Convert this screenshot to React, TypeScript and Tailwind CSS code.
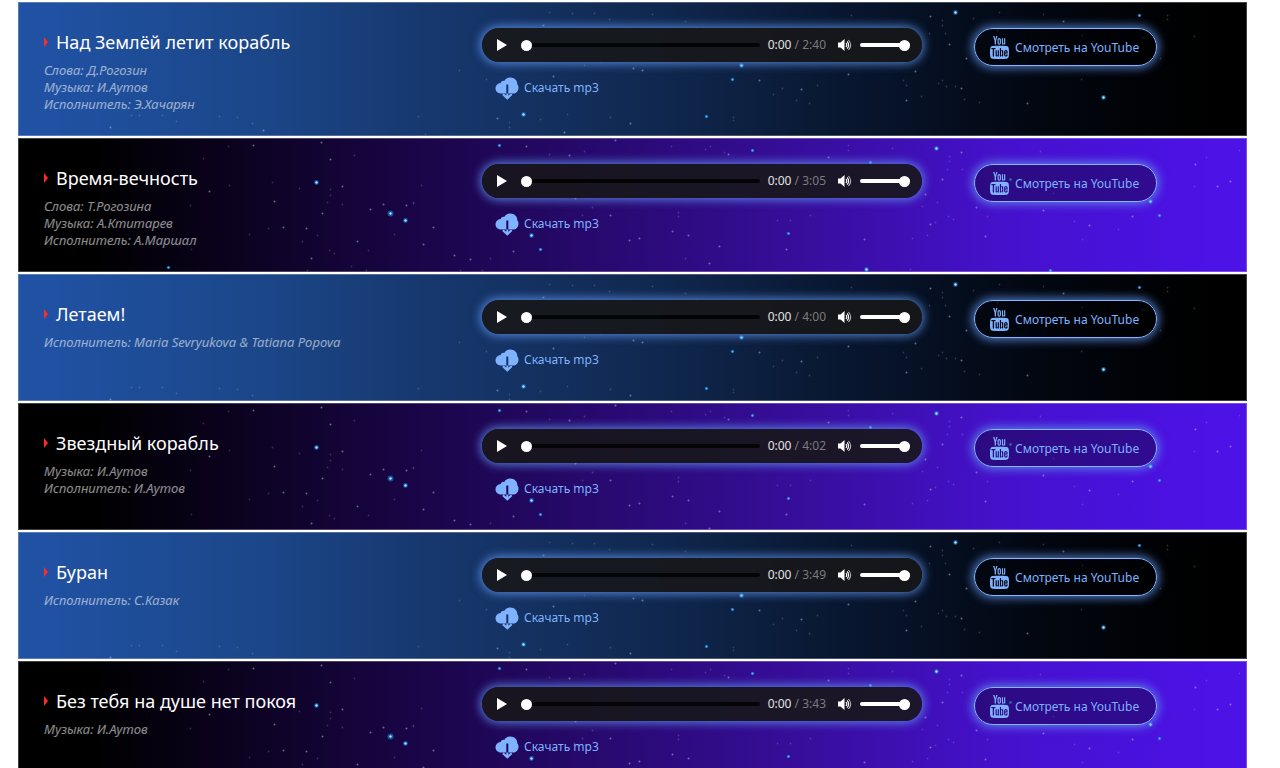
import { useState } from 'react';
import { TfiYoutube } from 'react-icons/tfi';

interface Song {
  id: number;
  title: string;
  credits: string[];
  duration: string;
  seconds: number;
}

// x, y, brightness: 1 = faint, 2 = normal, 3 = small blue, 4 and 5 = bright blue
type Star = [number, number, number];

const songs: Song[] = [
  {
    id: 1,
    title: 'Над Землёй летит корабль',
    credits: ['Слова: Д.Рогозин', 'Музыка: И.Аутов', 'Исполнитель: Э.Хачарян'],
    duration: '2:40',
    seconds: 160,
  },
  {
    id: 2,
    title: 'Время-вечность',
    credits: ['Слова: Т.Рогозина', 'Музыка: А.Ктитарев', 'Исполнитель: А.Маршал'],
    duration: '3:05',
    seconds: 185,
  },
  {
    id: 3,
    title: 'Летаем!',
    credits: ['Исполнитель: Maria Sevryukova & Tatiana Popova'],
    duration: '4:00',
    seconds: 240,
  },
  {
    id: 4,
    title: 'Звездный корабль',
    credits: ['Музыка: И.Аутов', 'Исполнитель: И.Аутов'],
    duration: '4:02',
    seconds: 242,
  },
  {
    id: 5,
    title: 'Буран',
    credits: ['Исполнитель: С.Казак'],
    duration: '3:49',
    seconds: 229,
  },
  {
    id: 6,
    title: 'Без тебя на душе нет покоя',
    credits: ['Музыка: И.Аутов'],
    duration: '3:43',
    seconds: 223,
  },
];

const blueSky: Star[] = [
  [110, 127, 2], [263, 130, 2], [139, 115, 1], [131, 115, 1], [162, 115, 1], [176, 121, 1], [219, 116, 1],
  [237, 117, 1], [252, 123, 1], [418, 116, 1], [543, 25, 2], [572, 13, 1], [549, 12, 1], [594, 13, 1],
  [609, 19, 1], [652, 14, 1], [685, 21, 1], [584, 65, 1], [600, 61, 1], [633, 68, 2], [642, 70, 2],
  [553, 76, 2], [486, 79, 1], [459, 70, 1], [497, 118, 2], [523, 114, 4], [509, 122, 1], [509, 127, 1],
  [567, 114, 1], [610, 117, 1], [630, 123, 2], [564, 132, 2], [425, 134, 1], [540, 119, 1], [696, 28, 1],
  [851, 15, 1], [930, 16, 2], [955, 12, 4], [942, 20, 1], [942, 25, 1], [929, 33, 1], [945, 33, 1],
  [949, 44, 2], [966, 58, 2], [741, 65, 4], [732, 79, 3], [759, 80, 2], [801, 89, 2], [817, 85, 1],
  [848, 74, 2], [915, 71, 2], [903, 80, 1], [906, 85, 1], [906, 100, 2], [921, 96, 1], [942, 80, 1],
  [938, 83, 1], [946, 86, 1], [955, 86, 1], [961, 88, 2], [964, 99, 1], [979, 102, 1], [706, 116, 3],
  [733, 117, 1], [733, 120, 1], [796, 100, 1], [809, 103, 1], [782, 88, 1], [773, 94, 1], [973, 18, 1],
  [999, 12, 1], [1043, 14, 1], [1063, 21, 2], [1139, 15, 3], [1167, 15, 1], [1167, 19, 1], [1194, 36, 1],
  [1160, 58, 1], [1081, 79, 1], [1103, 97, 4], [1027, 103, 2], [1082, 35, 1], [1142, 37, 1], [997, 30, 1],
];

const violetSky: Star[] = [
  [321, 6, 2], [253, 9, 2], [228, 10, 1], [330, 23, 2], [354, 19, 1], [203, 22, 1], [272, 46, 1],
  [316, 46, 4], [342, 50, 2], [229, 49, 1], [209, 55, 2], [299, 52, 1], [330, 53, 1], [330, 59, 1],
  [327, 66, 1], [342, 68, 1], [322, 77, 2], [274, 65, 2], [190, 69, 1], [383, 68, 2], [370, 73, 2],
  [390, 77, 5], [406, 69, 2], [405, 84, 4], [413, 66, 1], [283, 91, 2], [268, 92, 1], [306, 92, 2],
  [249, 98, 1], [317, 99, 1], [302, 105, 1], [357, 105, 2], [394, 98, 1], [191, 113, 1], [329, 114, 1],
  [334, 117, 1], [311, 122, 2], [368, 114, 1], [168, 131, 3], [307, 134, 1], [366, 134, 1], [351, 130, 1],
  [499, 9, 3], [526, 10, 2], [549, 18, 1], [569, 19, 2], [584, 15, 1], [615, 4, 2], [671, 10, 1],
  [705, 13, 1], [710, 10, 1], [724, 16, 1], [728, 18, 2], [752, 14, 3], [421, 49, 1], [413, 67, 1],
  [433, 91, 2], [423, 108, 2], [454, 119, 2], [470, 123, 2], [490, 122, 1], [513, 115, 2], [531, 99, 4],
  [540, 113, 3], [575, 62, 2], [592, 71, 1], [582, 79, 1], [574, 84, 1], [610, 79, 2], [629, 104, 2],
  [639, 102, 2], [672, 95, 2], [688, 99, 2], [678, 76, 1], [678, 80, 1], [719, 110, 2], [709, 127, 2],
  [685, 122, 1], [777, 84, 1], [788, 97, 3], [790, 84, 1], [786, 113, 2], [810, 79, 1], [460, 134, 1],
  [482, 134, 1], [828, 21, 2], [848, 9, 1], [848, 14, 1], [892, 12, 1], [936, 12, 4], [961, 16, 2],
  [949, 20, 1], [949, 25, 1], [947, 33, 1], [962, 33, 1], [942, 43, 2], [870, 26, 3], [925, 58, 2],
  [937, 66, 1], [922, 70, 1], [976, 71, 2], [948, 80, 1], [953, 83, 1], [935, 86, 1], [930, 88, 2],
  [927, 99, 1], [912, 102, 1], [864, 103, 2], [985, 100, 2], [987, 80, 1], [1043, 74, 2], [1074, 85, 1],
  [1089, 89, 2], [1132, 80, 2], [1150, 65, 4], [1159, 79, 3], [1040, 15, 1], [1010, 43, 3], [1053, 57, 1],
  [1195, 28, 2], [1206, 21, 1], [1194, 50, 1], [1217, 50, 2], [1230, 45, 2], [1239, 14, 1], [866, 133, 4],
  [910, 133, 1], [1050, 134, 3], [1118, 93, 1], [1082, 103, 1],
];

function Starfield({ stars }: { stars: Star[] }) {
  return (
    <svg className="absolute inset-0 w-full h-full pointer-events-none" aria-hidden="true">
      <g transform="translate(-18 -2)">
        {stars.map(([x, y, level]) => (
          <g key={`${x}-${y}`}>
            {level > 2 && (
              <circle cx={x + 0.5} cy={y + 0.5} r={level === 5 ? 3 : level === 4 ? 2.4 : 1.8} fill="#1683e0" opacity={0.6} />
            )}
            <circle
              cx={x + 0.5}
              cy={y + 0.5}
              r={level > 3 ? 1.2 : level > 1 ? 1 : 0.9}
              fill={level > 3 ? '#a5e4ff' : level === 3 ? '#5db4f2' : '#c3c3e6'}
              opacity={level > 2 ? 1 : level === 2 ? 0.5 : 0.22}
            />
          </g>
        ))}
      </g>
    </svg>
  );
}

function CloudDownload() {
  return (
    <svg className="w-6 h-[23px] shrink-0" viewBox="0 0 24 23" fill="currentColor" aria-hidden="true">
      <path
        fillRule="evenodd"
        d="M6 16.500C2.700 16.500.5 14 .5 11.200C.5 8.300 2.600 6.200 5.600 5.900C6.200 4.300 7.700 3.600 9.200 3.900C10.400 1.800 12.600.5 15.200.5C19.400.5 22.400 3.500 22.300 7.200C23.200 8.200 23.600 9.500 23.500 11.200C23.300 14.200 21 16.500 18 16.500H13.300V7.500H11.300V16.500Z"
      />
      <path d="M11.300 16.500h2v2.200l2.600-2.200 1.500 1.500-5.100 4.700L7.200 18l1.500-1.500 2.600 2.200z" />
    </svg>
  );
}

function VolumeIcon() {
  return (
    <svg className="w-[14px] h-3" viewBox="0 0 14 12" aria-hidden="true">
      <path d="M0 3.500H2.500L6.500 0V12L2.500 8.500H0Z" fill="#fff" />
      <g fill="none" stroke="#fff" strokeWidth="1.100">
        <path d="M8 4Q9.600 6 8 8" />
        <path d="M9.200 2.400Q12 6 9.200 9.600" />
        <path d="M10.500 1Q14.800 6 10.500 11" opacity="0.7" />
      </g>
    </svg>
  );
}

const glow = 'shadow-[0_0_10px_2px_rgba(96,150,240,0.8)]';

const range =
  'appearance-none h-1 rounded-full cursor-pointer [&::-webkit-slider-thumb]:appearance-none [&::-webkit-slider-thumb]:w-[11px] [&::-webkit-slider-thumb]:h-[11px] [&::-webkit-slider-thumb]:rounded-full [&::-webkit-slider-thumb]:bg-white';

const formatTime = (s: number) => `${Math.floor(s / 60)}:${String(s % 60).padStart(2, '0')}`;

function Player({ song }: { song: Song }) {
  const [time, setTime] = useState(0);
  const [volume, setVolume] = useState(100);

  return (
    <div className={`flex items-center h-[34px] pl-[15px] pr-3 rounded-full bg-[#17171a]/90 ${glow}`}>
      <button type="button" aria-label="Play" className="mr-[14px] cursor-pointer">
        <svg className="w-[10px] h-3" viewBox="0 0 10 12" fill="#fff" aria-hidden="true">
          <path d="M0 0L10 6L0 12Z" />
        </svg>
      </button>
      <input
        type="range"
        aria-label={`Seek: ${song.title}`}
        min={0}
        max={song.seconds}
        value={time}
        onChange={(e) => setTime(Number(e.target.value))}
        className={`${range} flex-1 min-w-0 bg-black/80`}
      />
      <div className="ml-2 text-[12px] leading-4 text-[#7b7b7d] whitespace-nowrap">
        <span className="text-[#e2e2e2]">{formatTime(time)}</span> / {song.duration}
      </div>
      <button type="button" aria-label="Mute" className="ml-3 mr-2 cursor-pointer" onClick={() => setVolume(0)}>
        <VolumeIcon />
      </button>
      <input
        type="range"
        aria-label={`Volume: ${song.title}`}
        value={volume}
        onChange={(e) => setVolume(Number(e.target.value))}
        className={`${range} w-[50px] bg-white`}
      />
    </div>
  );
}

export default function App() {
  return (
    <main className="flex flex-col gap-[2px] pt-[2px] pl-[18px] pr-[33px] bg-white font-['Noto_Sans','Liberation_Sans',sans-serif]">
      {songs.map((song, i) => {
        const violet = i % 2 === 1;
        return (
          <section
            key={song.id}
            className={`relative overflow-hidden pt-[26px] pb-[23px] ${
              violet
                ? 'bg-[linear-gradient(90deg,#000_6%,#180543_31%,#2a0a76_50%,#380e9f_65%,#4511cc_80%,#4c12e6_97%)]'
                : 'bg-[linear-gradient(90deg,#2051a2_3%,#1b4688_20%,#17386f_33%,#10284f_52%,#081730_67%,#02060f_84%,#000_97%)]'
            }`}
          >
            <Starfield stars={violet ? violetSky : blueSky} />
            <div className="absolute inset-0 border border-white/25 pointer-events-none" />
            <div className="relative grid grid-cols-[464fr_492fr_273fr]">
              <div className="pl-[26px] pr-4">
                <h2 className="flex items-center gap-2 text-[18px] leading-7 text-white">
                  <svg className="w-1 h-[10px] shrink-0" viewBox="0 0 4 10" fill="#ff2a2a" aria-hidden="true">
                    <path d="M0 0L4 5L0 10Z" />
                  </svg>
                  {song.title}
                </h2>
                <div className="mt-[6px] text-[13px] leading-[17px] italic text-white/55">
                  {song.credits.map((credit) => (
                    <p key={credit}>{credit}</p>
                  ))}
                </div>
              </div>

              <div className="pr-[52px]">
                <Player song={song} />
                <a href="#" className="inline-flex items-center gap-[5px] h-9 mt-2 ml-[13px] text-[12px] text-[#7fb2ff]">
                  <CloudDownload />
                  Скачать mp3
                </a>
              </div>

              <div>
                <a
                  href="#"
                  className={`inline-flex items-center gap-1 h-[38px] pl-[13px] pr-[17px] rounded-full border border-[#86b6ff] bg-black/35 text-[12px] text-[#7fb2ff] whitespace-nowrap ${glow}`}
                >
                  <TfiYoutube size={23} />
                  <span className="pt-[2px]">Смотреть на YouTube</span>
                </a>
              </div>
            </div>
          </section>
        );
      })}
    </main>
  );
}
